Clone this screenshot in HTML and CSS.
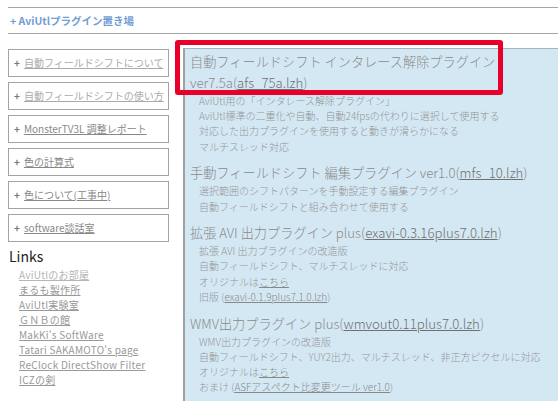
FILE: index.html
```html
<!DOCTYPE html>
<html lang="ja">
<head>
<meta charset="utf-8">
<title>AviUtlプラグイン置き場</title>
<link rel="stylesheet" href="styles.css">
</head>
<body>
<header class="site-header">
  <span class="site-title">+ AviUtlプラグイン置き場</span>
</header>
<div class="layout">
  <nav class="sidebar">
    <ul class="menu">
      <li class="menu-box"><span class="plus">+</span> <a href="#">自動フィールドシフトについて</a></li>
      <li class="menu-box"><span class="plus">+</span> <a href="#">自動フィールドシフトの使い方</a></li>
      <li class="menu-box"><span class="plus">+</span> <a href="#" class="dark">MonsterTV3L 調整レポート</a></li>
      <li class="menu-box"><span class="plus">+</span> <a href="#" class="dark">色の計算式</a></li>
      <li class="menu-box"><span class="plus">+</span> <a href="#" class="dark">色について(工事中)</a></li>
      <li class="menu-box"><span class="plus">+</span> <a href="#" class="dark">software談話室</a></li>
    </ul>
    <h3 class="links-title">Links</h3>
    <ul class="links">
      <li><a href="#" class="light">AviUtlのお部屋</a></li>
      <li><a href="#">まるも製作所</a></li>
      <li><a href="#">AviUtl実験室</a></li>
      <li><a href="#">ＧＮＢの館</a></li>
      <li><a href="#">MakKi's SoftWare</a></li>
      <li><a href="#">Tatari SAKAMOTO's page</a></li>
      <li><a href="#">ReClock DirectShow Filter</a></li>
      <li><a href="#">ICZの剣</a></li>
    </ul>
  </nav>
  <main class="content">
    <section class="plugin">
      <h2 class="plugin-title">自動フィールドシフト インタレース解除プラグイン<br>ver7.5a(<a href="#">afs_75a.lzh</a>)</h2>
      <ul class="plugin-desc">
        <li>AviUtl用の「インタレース解除プラグイン」</li>
        <li>AviUtl標準の二重化や自動、自動24fpsの代わりに選択して使用する</li>
        <li>対応した出力プラグインを使用すると動きが滑らかになる</li>
        <li>マルチスレッド対応</li>
      </ul>
    </section>
    <section class="plugin">
      <h2 class="plugin-title">手動フィールドシフト 編集プラグイン ver1.0(<a href="#">mfs_10.lzh</a>)</h2>
      <ul class="plugin-desc">
        <li>選択範囲のシフトパターンを手動設定する編集プラグイン</li>
        <li>自動フィールドシフトと組み合わせて使用する</li>
      </ul>
    </section>
    <section class="plugin">
      <h2 class="plugin-title">拡張 AVI 出力プラグイン plus(<a href="#">exavi-0.3.16plus7.0.lzh</a>)</h2>
      <ul class="plugin-desc">
        <li>拡張 AVI 出力プラグインの改造版</li>
        <li>自動フィールドシフト、マルチスレッドに対応</li>
        <li>オリジナルは<a href="#">こちら</a></li>
        <li>旧版 (<a href="#">exavi-0.1.9plus7.1.0.lzh</a>)</li>
      </ul>
    </section>
    <section class="plugin">
      <h2 class="plugin-title">WMV出力プラグイン plus(<a href="#">wmvout0.11plus7.0.lzh</a>)</h2>
      <ul class="plugin-desc">
        <li>WMV出力プラグインの改造版</li>
        <li>自動フィールドシフト、YUY2出力、マルチスレッド、非正方ピクセルに対応</li>
        <li>オリジナルは<a href="#">こちら</a></li>
        <li>おまけ (<a href="#">ASFアスペクト比変更ツール ver1.0</a>)</li>
      </ul>
    </section>
  </main>
</div>
<div class="highlight"></div>
</body>
</html>
```

FILE: styles.css
```css
html, body {
  margin: 0;
  padding: 0;
  background: #ffffff;
  overflow: hidden;
}
body {
  position: relative;
  font-family: "Noto Sans CJK JP", sans-serif;
  color: #999;
  width: 558px;
  height: 401px;
}
ul {
  list-style: none;
  margin: 0;
  padding: 0;
}
a {
  color: inherit;
}

.site-header {
  margin: 7px 0 0 8px;
  border-top: 1px solid #a6a6a6;
  border-bottom: 1px solid #a6a6a6;
  height: 25px;
  display: flex;
  align-items: center;
  padding-left: 2px;
}
.site-title {
  font-size: 10.5px;
  font-weight: bold;
  color: #729dd4;
  line-height: 14px;
}

.layout {
  display: flex;
  margin-top: 15px;
  align-items: flex-start;
}

.sidebar {
  width: 161px;
  margin-left: 8px;
  flex: none;
}
.menu {
  display: flex;
  flex-direction: column;
  gap: 5px;
}
.menu-box {
  height: 28px;
  box-sizing: border-box;
  border: 1px solid #a3a3a3;
  display: flex;
  align-items: center;
  padding-left: 5px;
  font-size: 10px;
  line-height: 14px;
  white-space: nowrap;
  color: #aaa;
}
.menu-box .plus {
  color: #777;
  margin-right: 4px;
  font-weight: bold;
}
.menu-box a.dark {
  color: #888;
}
.links-title {
  margin: 5px 0 0 1px;
  font-size: 14px;
  font-weight: normal;
  line-height: 18px;
  color: #222;
}
.links {
  margin: 2px 0 0 11px;
  font-size: 10px;
  line-height: 15px;
  color: #999;
  letter-spacing: 0.25px;
}
.links a.light {
  color: #b5b5b5;
}

.content {
  flex: 1;
  margin-left: 14px;
  margin-top: -1px;
  background: #d4e8f4;
  border-top: 1px solid #a8b4bc;
  border-left: 2px solid #a0a0a0;
  padding: 2px 0 20px 5px;
  min-height: 360px;
}
.plugin + .plugin {
  margin-top: 8.5px;
}
.plugin-title {
  margin: 0;
  font-size: 13.2px;
  font-weight: 300;
  line-height: 21px;
  color: #8a8a8a;
  white-space: nowrap;
}
.plugin-title a {
  color: #707070;
}
.plugin-desc {
  padding-left: 9px;
  font-size: 10px;
  font-weight: 300;
  line-height: 15.2px;
  color: #959595;
  white-space: nowrap;
}
.plugin-desc a {
  color: #888;
}

.highlight {
  position: absolute;
  left: 175px;
  top: 40px;
  width: 328px;
  height: 55px;
  box-sizing: border-box;
  border: 5px solid #e8002a;
  border-radius: 3px;
}
```
